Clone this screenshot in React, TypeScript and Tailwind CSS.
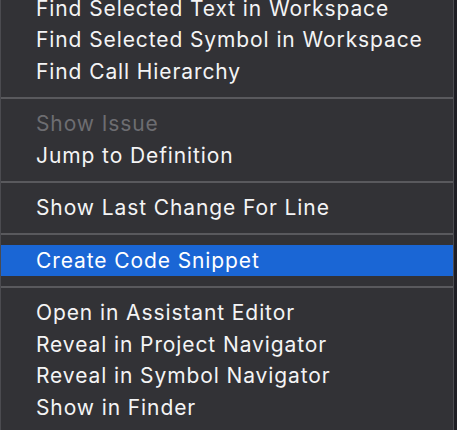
import React from 'react';

type Item = { label: string; disabled?: boolean; active?: boolean };

const groups: Item[][] = [
  [
    { label: 'Find Selected Text in Workspace' },
    { label: 'Find Selected Symbol in Workspace' },
    { label: 'Find Call Hierarchy' },
  ],
  [{ label: 'Show Issue', disabled: true }, { label: 'Jump to Definition' }],
  [{ label: 'Show Last Change For Line' }],
  [{ label: 'Create Code Snippet', active: true }],
  [
    { label: 'Open in Assistant Editor' },
    { label: 'Reveal in Project Navigator' },
    { label: 'Reveal in Symbol Navigator' },
    { label: 'Show in Finder' },
  ],
];

const MenuRow: React.FC<{ item: Item }> = ({ item }) => (
  <div
    className={
      'h-[31.5px] flex items-center pl-[35px] text-[21px] tracking-[0.9px] leading-none whitespace-nowrap ' +
      (item.active
        ? 'bg-[#1a66d5] text-white'
        : item.disabled
        ? 'text-[#6d6d71]'
        : 'text-[#f4f4f5]')
    }
  >
    {item.label}
  </div>
);

export default function App() {
  return (
    <div className="w-[457px] h-[430px] overflow-hidden bg-[#1e1e24] flex">
      <div
        className="w-[454px] h-full bg-[#323236] border-l border-r border-[#4b4b50] flex flex-col"
        style={{ fontFamily: 'Inter, "Noto Sans", sans-serif' }}
      >
        <div className="-mt-[7.5px]">
          {groups.map((group, gi) => (
            <div key={gi}>
              {gi > 0 && (
                <div className="py-[9.5px]">
                  <div className="h-[2px] bg-[#59595d]" />
                </div>
              )}
              {group.map((item) => (
                <MenuRow key={item.label} item={item} />
              ))}
            </div>
          ))}
        </div>
      </div>
    </div>
  );
}
